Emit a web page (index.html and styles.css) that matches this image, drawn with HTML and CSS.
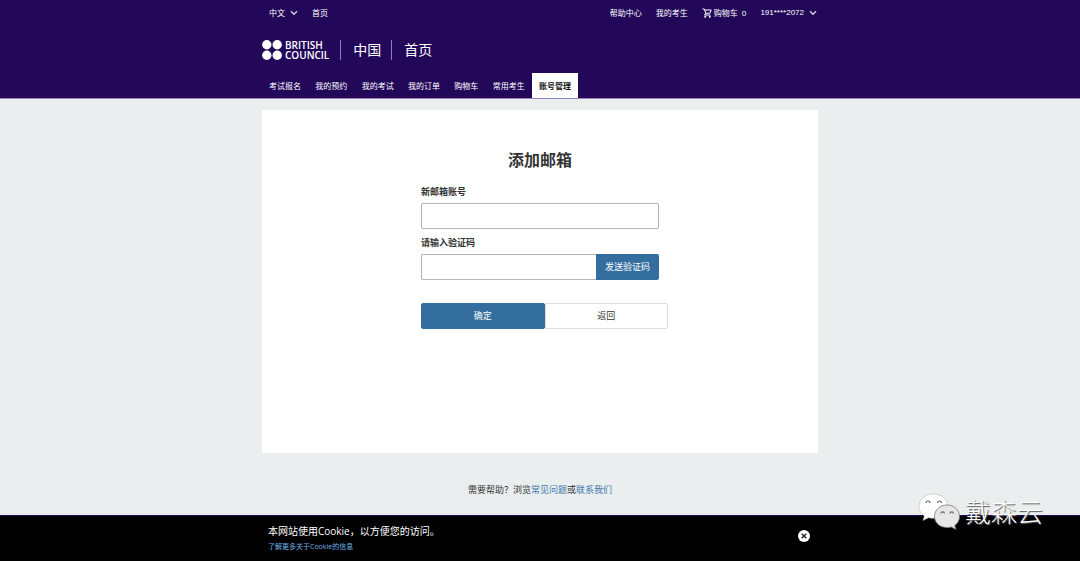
FILE: index.html
```html
<!DOCTYPE html>
<html lang="zh-CN">
<head>
<meta charset="utf-8">
<meta name="viewport" content="width=device-width, initial-scale=1">
<title>添加邮箱</title>
<link rel="stylesheet" href="styles.css">
</head>
<body>
<header class="header">
  <div class="container">
    <div class="topbar">
      <div class="topbar-group">
        <button class="top-item" type="button">中文
          <svg class="chevron" viewBox="0 0 8 6" aria-hidden="true"><path d="M1 1.200 4 4.200 7 1.200"/></svg>
        </button>
        <a class="top-item" href="#">首页</a>
      </div>
      <div class="topbar-group">
        <a class="top-item" href="#">帮助中心</a>
        <a class="top-item" href="#">我的考生</a>
        <a class="top-item cart" href="#">
          <svg class="cart-icon" viewBox="0 0 20 20" aria-hidden="true"><path class="cart-line" d="M1 2h3.500l3 8.500h8L18.500 4H5.500M7.500 10.500 5 14h12"/><circle cx="6.500" cy="17.500" r="2"/><circle cx="15.500" cy="17.500" r="2"/></svg>
          <span>购物车&nbsp; 0</span>
        </a>
        <button class="top-item" type="button"><span class="phone">191****2072</span>
          <svg class="chevron" viewBox="0 0 8 6" aria-hidden="true"><path d="M1 1.200 4 4.200 7 1.200"/></svg>
        </button>
      </div>
    </div>
    <div class="brand">
      <a class="logo" href="#">
        <svg class="logo-dots" viewBox="0 0 20 20" aria-hidden="true"><circle cx="4.800" cy="4.800" r="4.700"/><circle cx="15.200" cy="4.800" r="4.700"/><circle cx="4.800" cy="15.200" r="4.700"/><circle cx="15.200" cy="15.200" r="4.700"/></svg>
        <span class="logo-text">BRITISH<br>COUNCIL</span>
      </a>
      <a class="brand-link" href="#">中国</a>
      <a class="brand-link" href="#">首页</a>
    </div>
    <nav class="nav">
      <a class="tab" href="#">考试报名</a>
      <a class="tab" href="#">我的预约</a>
      <a class="tab" href="#">我的考试</a>
      <a class="tab" href="#">我的订单</a>
      <a class="tab" href="#">购物车</a>
      <a class="tab" href="#">常用考生</a>
      <a class="tab tab-active" href="#" aria-current="page">账号管理</a>
    </nav>
  </div>
</header>

<main class="container main">
  <section class="card">
    <form class="form">
      <h1 class="title">添加邮箱</h1>
      <label class="label" for="email">新邮箱账号</label>
      <input class="input" id="email" type="email">
      <label class="label" for="code">请输入验证码</label>
      <div class="code-row">
        <input class="input code-input" id="code" type="text">
        <button class="button button-primary send" type="button">发送验证码</button>
      </div>
      <div class="actions">
        <button class="button button-primary" type="submit">确定</button>
        <button class="button button-plain" type="button">返回</button>
      </div>
    </form>
  </section>
  <p class="help">需要帮助？浏览<a href="#">常见问题</a>或<a href="#">联系我们</a></p>
</main>

<aside class="cookie">
  <div class="container cookie-inner">
    <div>
      <p class="cookie-text">本网站使用Cookie，以方便您的访问。</p>
      <a class="cookie-link" href="#">了解更多关于Cookie的信息</a>
    </div>
    <button class="close" type="button" aria-label="关闭">
      <svg viewBox="0 0 12 12" aria-hidden="true"><circle cx="6" cy="6" r="6"/><path d="M3.700 3.700 8.300 8.300M8.300 3.700 3.700 8.300"/></svg>
    </button>
  </div>
</aside>

<div class="watermark">
  <svg class="wechat" viewBox="0 0 42 38" aria-hidden="true">
    <path class="bubble-back" d="M15 1C7 1 1 6.500 1 13.500c0 4 2 7.300 5.300 9.500L5 27.500l5.500-2.800c1.500.4 3 .6 4.500.6 8 0 15-5 15-12S23 1 15 1Z"/>
    <path class="bubble-front" d="M29 12c-7 0-12.500 5-12.500 11.500S22 34.500 29 34.500c1.500 0 3-.2 4.200-.6l4.800 2.600-1.300-4c3-2 4.800-5.200 4.800-9C41.500 17 36 12 29 12Z"/>
    <path class="eyes" d="M8 10a2 2 0 0 1 4 0M19.500 10a2 2 0 0 1 4 0M23 20.500a1.700 1.700 0 0 1 3.400 0M32 20.500a1.700 1.700 0 0 1 3.400 0"/>
  </svg>
  <span>戴森云</span>
</div>
</body>
</html>
```

FILE: styles.css
```css
* {
  box-sizing: border-box;
}

body {
  margin: 0;
  min-height: 100vh;
  display: flex;
  flex-direction: column;
  background: #eaeeef;
  color: #333;
  font-family: "Open Sans", "Noto Sans CJK SC", sans-serif;
  font-size: 9px;
  line-height: 14px;
}

a {
  color: inherit;
  text-decoration: none;
}

button,
input {
  font: inherit;
  color: inherit;
}

button {
  padding: 0;
  border: 0;
  background: none;
  cursor: pointer;
}

.container {
  width: 100%;
  max-width: 556px;
  margin: 0 auto;
}

.header {
  background: #23085a;
  border-bottom: 1px solid #9584b4;
  color: #fff;
  font-size: 8px;
}

.topbar {
  display: flex;
  justify-content: space-between;
  padding: 6px 1px 0 7px;
}

.topbar-group {
  display: flex;
  gap: 14px;
}

.top-item {
  display: flex;
  align-items: center;
  gap: 5px;
}

.phone {
  font-family: "Liberation Sans", sans-serif;
}

.chevron {
  width: 8px;
  height: 6px;
  fill: none;
  stroke: #d8d2e4;
  stroke-width: 1.4;
}

.cart {
  gap: 2px;
}

.cart-icon {
  width: 10px;
  height: 10px;
  fill: #fff;
}

.cart-line {
  fill: none;
  stroke: #fff;
  stroke-width: 2;
}

.brand {
  display: flex;
  align-items: center;
  margin: 20px 0 13px;
}

.logo {
  display: flex;
  align-items: center;
  gap: 3px;
  margin-right: 11px;
}

.logo-dots {
  width: 20px;
  height: 20px;
  fill: #fff;
}

.logo-text {
  font-size: 10px;
  font-weight: 600;
  line-height: 10px;
}

.brand-link {
  padding: 0 10px 0 12px;
  border-left: 1px solid #8d7fae;
  font-size: 14px;
  line-height: 20px;
}

.nav {
  display: flex;
  justify-content: space-between;
  max-width: 316px;
}

.tab {
  padding: 6px 7px 5px;
  line-height: 14px;
}

.tab-active {
  background: #fff;
  color: #111;
  font-weight: 700;
}

.main {
  flex: 1;
  display: flex;
  flex-direction: column;
  padding-top: 11px;
}

.card {
  min-height: 343px;
  padding: 38px 20px;
  background: #fff;
}

.form {
  max-width: 238px;
  margin: 0 auto;
}

.title {
  margin: 0 0 12px;
  font-size: 16px;
  line-height: 24px;
  text-align: center;
}

.label {
  display: block;
  margin-bottom: 4px;
  font-weight: 600;
  line-height: 15px;
}

.input {
  display: block;
  width: 100%;
  height: 26px;
  margin-bottom: 6px;
  padding: 0 7px;
  border: 1px solid #b5b5b5;
  border-radius: 2px;
  background: #fff;
}

.code-input {
  flex: 1;
  min-width: 0;
  margin: 0;
  border-right: 0;
  border-radius: 2px 0 0 2px;
}

.code-row {
  display: flex;
}

.button {
  height: 26px;
  border-radius: 2px;
}

.button-primary {
  background: #336e9f;
  color: #fff;
}

.send {
  padding: 0 9px;
  border-radius: 0 2px 2px 0;
}

.actions {
  display: grid;
  grid-template-columns: 1fr 1fr;
  margin: 23px -9px 0 0;
}

.button-plain {
  border: 1px solid #ddd;
  background: #fff;
}

.help {
  margin: 30px 0 18px;
  text-align: center;
}

.help a {
  color: #3b78ac;
}

.cookie {
  border-top: 1px solid #23085a;
  background: #000;
  color: #fff;
}

.cookie-inner {
  display: flex;
  align-items: flex-start;
  justify-content: space-between;
  padding: 7px 8px 7px 6px;
}

.cookie-text {
  margin: 0;
  font-size: 10px;
  line-height: 16px;
}

.cookie-link {
  display: block;
  color: #6fb0e6;
  font-size: 7px;
  line-height: 15px;
}

.close {
  margin-top: 7px;
}

.close svg {
  display: block;
  width: 12px;
  height: 12px;
  fill: #fff;
  stroke-width: 1.4;
}

.close path {
  stroke: #222;
}

.watermark {
  position: absolute;
  right: 37px;
  bottom: 30px;
  display: flex;
  align-items: center;
  gap: 5px;
  color: #fff;
  font-size: 26px;
  font-weight: 300;
  line-height: 38px;
  text-shadow: 1px 1px 1px #555;
}

.wechat {
  width: 42px;
  height: 38px;
}

.bubble-back {
  fill: #fff;
  stroke: #aaa;
  stroke-width: 0.5;
}

.bubble-front {
  fill: #e6e6e6;
  stroke: #777;
  stroke-width: 0.8;
}

.eyes {
  fill: none;
  stroke: #666;
  stroke-width: 1.2;
}
```
